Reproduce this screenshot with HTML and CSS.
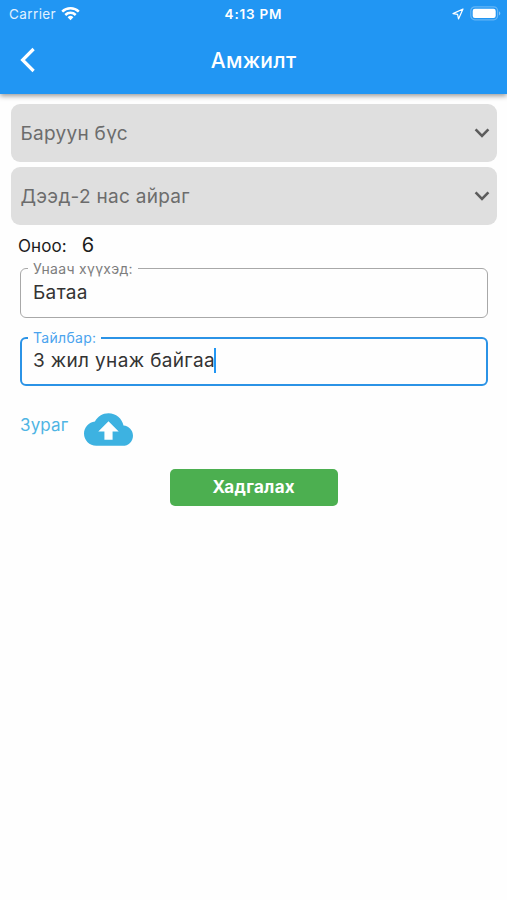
FILE: index.html
```html
<!DOCTYPE html>
<html lang="mn">
<head>
    <meta charset="UTF-8">
    <meta name="viewport" content="width=device-width, initial-scale=1.0">
    <title>Амжилт</title>
    <link rel="stylesheet" href="styles.css">
</head>
<body>

    <!-- Header -->
    <header class="app-header">
        <div class="status-bar">
            <div class="status-left">
                <span class="carrier">Carrier</span>
                <svg width="19" height="15" viewBox="0 0 19 15" fill="none" stroke="#fff" stroke-width="2.5">
                    <path d="M1.2 5.6a11.8 11.8 0 0 1 16.6 0"/>
                    <path d="M4.3 9a7.4 7.4 0 0 1 10.4 0"/>
                    <path d="M9.5 14.2l-2.9-3a4.1 4.1 0 0 1 5.8 0z" fill="#fff" stroke="none"/>
                </svg>
            </div>
            <span class="clock">4:13 PM</span>
            <div class="status-right">
                <svg width="12" height="12" viewBox="0 0 12 12" fill="none" stroke="#fff" stroke-width="1.2" stroke-linejoin="round">
                    <path d="M11 1L1 5.6l4.6.7.9 4.7z"/>
                </svg>
                <svg width="31" height="15" viewBox="0 0 31 15">
                    <rect x="0.8" y="0.8" width="26.8" height="13" rx="4" fill="none" stroke="#fff" stroke-opacity="0.3" stroke-width="1.2"/>
                    <rect x="2.7" y="2.7" width="23" height="9.2" rx="2.2" fill="#fff"/>
                    <path d="M29 5.2c1.8.8 1.8 3.4 0 4.2z" fill="#fff" fill-opacity="0.45"/>
                </svg>
            </div>
        </div>
        <div class="title-bar">
            <svg class="back" width="16" height="26" viewBox="0 0 16 26" fill="none" stroke="#fff" stroke-width="3.2">
                <path d="M13.6 2L2.6 13l11 11"/>
            </svg>
            <h1>Амжилт</h1>
        </div>
    </header>

    <!-- Form -->
    <main class="form">
        <div class="select">
            <span>Баруун бүс</span>
            <svg width="16" height="10" viewBox="0 0 16 10" fill="none" stroke="#5c5c5c" stroke-width="2.6">
                <path d="M1.6 1.4L8 7.8l6.4-6.4"/>
            </svg>
        </div>
        <div class="select">
            <span>Дээд-2 нас айраг</span>
            <svg width="16" height="10" viewBox="0 0 16 10" fill="none" stroke="#5c5c5c" stroke-width="2.6">
                <path d="M1.6 1.4L8 7.8l6.4-6.4"/>
            </svg>
        </div>

        <div class="score">
            <span class="score-label">Оноо:</span>
            <span class="score-value">6</span>
        </div>

        <fieldset class="field">
            <legend>Унаач хүүхэд:</legend>
            <span>Батаа</span>
        </fieldset>

        <fieldset class="field focused">
            <legend>Тайлбар:</legend>
            <span>3 жил унаж байгаа</span><i class="caret"></i>
        </fieldset>

        <div class="upload">
            <span>Зураг</span>
            <svg width="49" height="49" viewBox="0 0 24 24" fill="#3db2e1">
                <path d="M19.35 10.04C18.67 6.59 15.64 4 12 4 9.11 4 6.6 5.64 5.35 8.04 2.34 8.36 0 10.91 0 14c0 3.31 2.69 6 6 6h13c2.76 0 5-2.24 5-5 0-2.64-2.05-4.78-4.65-4.96zM14 13v4h-4v-4H7l5-5 5 5h-3z"/>
            </svg>
        </div>

        <button class="save">Хадгалах</button>
    </main>

</body>
</html>
```

FILE: styles.css
```css
* {
    margin: 0;
    padding: 0;
    box-sizing: border-box;
}

body {
    font-family: Inter, 'Liberation Sans', sans-serif;
    height: 100vh;
    background-color: #fefefe;
    color: #333;
    overflow: hidden;
}

svg {
    display: block;
    flex: none;
}

/* Header */
.app-header {
    height: 94px;
    background-color: #2196f3;
    color: white;
    box-shadow: 0 2px 5px rgba(0, 0, 0, 0.4);
}

.status-bar {
    display: grid;
    grid-template-columns: 1fr auto 1fr;
    align-items: center;
    height: 27px;
    padding: 0 6px 0 9px;
    font-size: 13px;
}

.status-left,
.status-right {
    display: flex;
    align-items: center;
    gap: 6px;
}

.status-left {
    gap: 5px;
}

.status-right {
    justify-content: flex-end;
}

.carrier {
    font-size: 13.5px;
    letter-spacing: 0.4px;
    color: #e0f1ff;
}

.clock {
    margin-right: 3px;
    font-size: 13.5px;
    font-weight: 600;
    letter-spacing: 0.8px;
}

.title-bar {
    display: grid;
    grid-template-columns: 1fr auto 1fr;
    align-items: center;
    height: 66px;
    padding-left: 20px;
}

.title-bar h1 {
    font-size: 21px;
    font-weight: 500;
    letter-spacing: 0.3px;
    margin-right: 20px;
}

/* Form */
.form {
    padding: 10px 10px 0 11px;
}

.select {
    display: flex;
    align-items: center;
    justify-content: space-between;
    height: 58px;
    margin-bottom: 5.4px;
    padding: 0 7px 0 9.5px;
    border-radius: 9px;
    background-color: #dfdfdf;
    color: #6c6c6c;
    font-size: 19px;
    letter-spacing: 0.28px;
}

.score {
    display: flex;
    align-items: baseline;
    gap: 15px;
    height: 30px;
    padding: 2px 0 0 7px;
    color: #1c1c1c;
}

.score-label {
    font-size: 17px;
    letter-spacing: 0.1px;
}

.score-value {
    font-size: 20px;
}

/* Outlined inputs, the legend cuts the top border */
.field {
    display: flex;
    height: 57px;
    margin: 0 9px 12px;
    padding: 4px 11px 0 12px;
    border: 1px solid #a8a8a8;
    border-radius: 6px;
    font-size: 19px;
    line-height: 24px;
    letter-spacing: 0.35px;
}

.field legend {
    margin-left: -5px;
    padding: 0 5px;
    color: #7d7d7d;
    font-size: 14px;
    line-height: 16px;
    letter-spacing: 0.3px;
}

.focused {
    height: 56px;
    padding: 3px 10px 0 11px;
    border: 2px solid #2b93e6;
}

.focused legend {
    color: #4ba4ee;
}

.caret {
    width: 2px;
    height: 25px;
    margin: -1px 0 0 -1px;
    background-color: #2196f3;
}

.upload {
    display: flex;
    gap: 16px;
    margin: 19px 0 0 9px;
    color: #4fb5e4;
    font-size: 17px;
    letter-spacing: 0.15px;
}

.upload span {
    padding-top: 10px;
}

.save {
    display: block;
    width: 168.5px;
    height: 37px;
    margin: 15px auto 0 158.5px;
    border: 0;
    border-radius: 5px;
    background-color: #4caf50;
    color: white;
    font: bold 17px Inter, 'Liberation Sans', sans-serif;
    letter-spacing: 0.3px;
}
```
